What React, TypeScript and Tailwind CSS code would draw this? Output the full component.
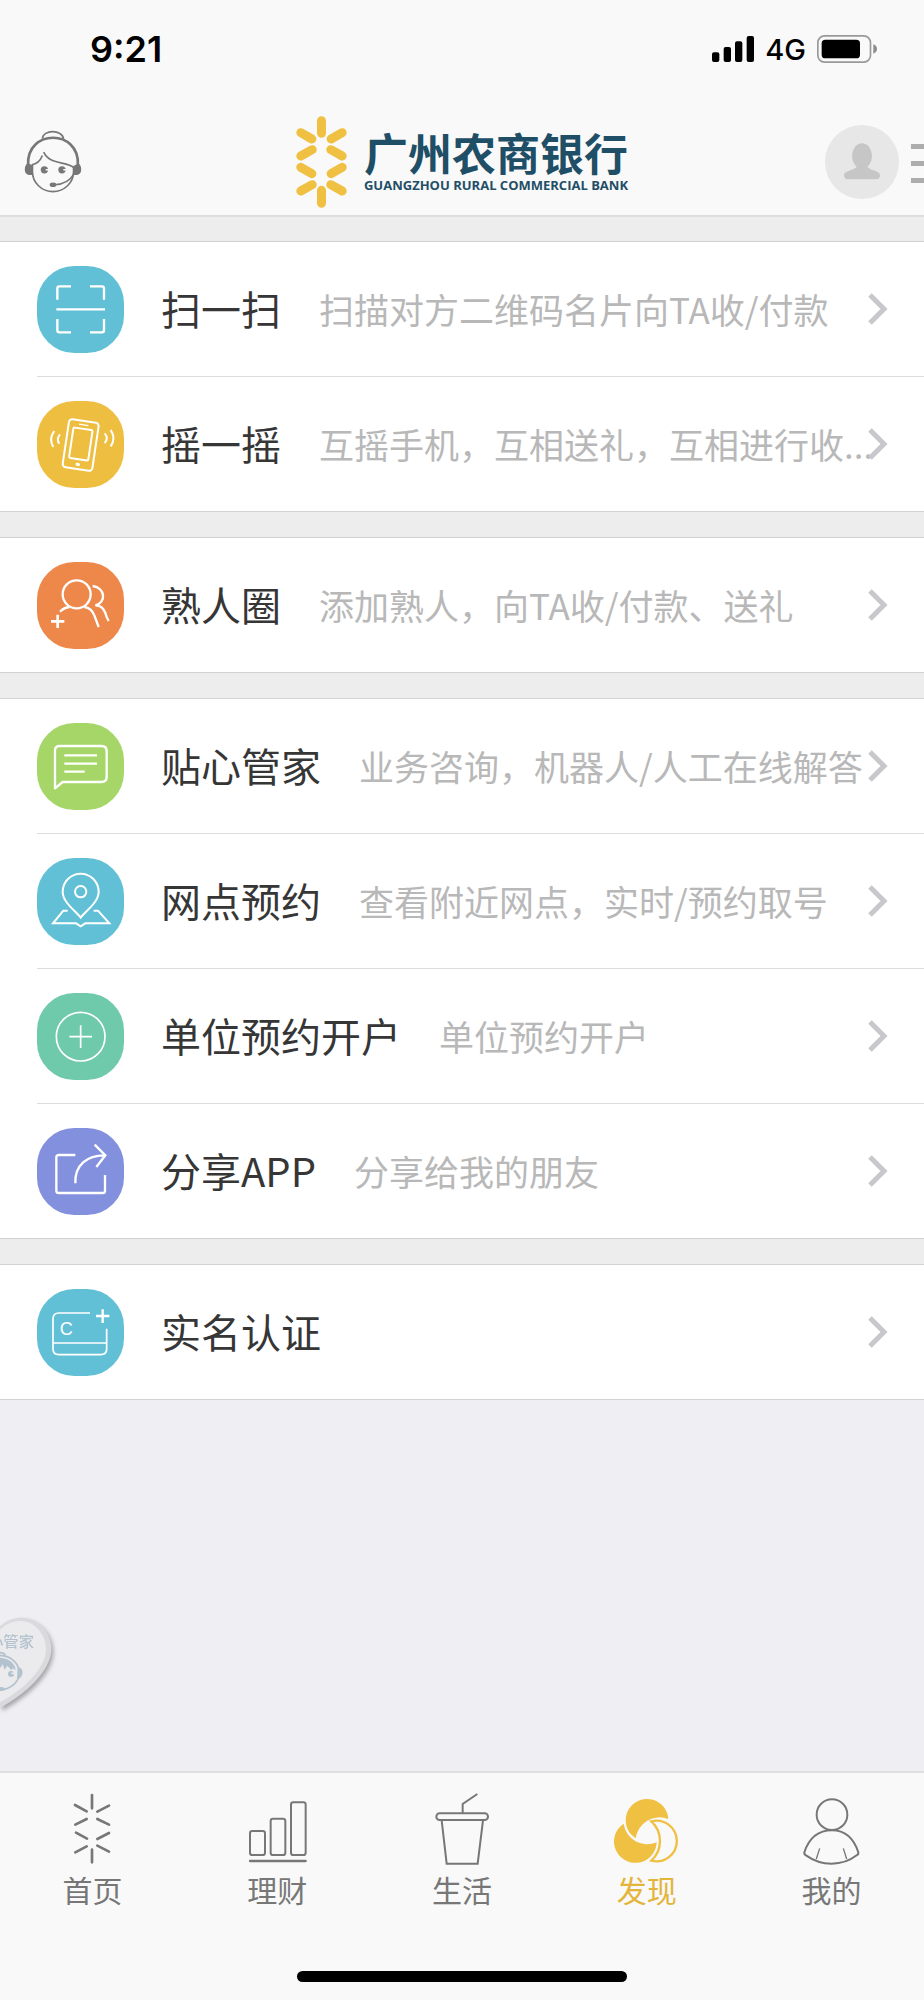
import type { ReactNode } from 'react'
import { clsx } from 'clsx'

type Item = {
  title: string
  desc?: string
  color: string
  icon: ReactNode
}

const scanIcon = (
  <g strokeWidth="7">
    <path d="M102 61H67q-6 0-6 6v34M159 61h36q6 0 6 6v34M201 159v34q0 6-6 6h-36M61 159v34q0 6 6 6h35" />
    <path d="M58 130H204" />
  </g>
)

const shakeIcon = (
  <g strokeWidth="6">
    <g transform="translate(131 132) rotate(8.5)">
      <rect x="-45" y="-73" width="90" height="146" rx="10" />
      <rect x="-29" y="-49" width="58" height="92" rx="4" />
      <path d="M-14-61H14" strokeWidth="4" />
      <ellipse cx="0" cy="59" rx="7" ry="5" fill="white" stroke="none" />
    </g>
    <path d="M52 90Q34 114 49 138M69 100Q57 114 67 128M203 97Q216 112 203 126M221 87Q238 112 221 136" />
  </g>
)

const friendsIcon = (
  <g strokeWidth="7">
    <circle cx="119" cy="97" r="42" />
    <path d="M69 149Q80 137 98 135M142 135Q163 138 172 160L185 195" />
    <path d="M167 72C205 77 209 122 175 130Q197 130 205 153Q208 165 215 177" />
    <path d="M42 178H82M62 158V198" strokeWidth="8" />
  </g>
)

const chatIcon = (
  <g strokeWidth="7">
    <path d="M54 196V82Q54 69 68 69H193Q209 69 209 84V162Q209 177 193 177H77Z" strokeLinejoin="round" />
    <path d="M82 97H180M82 122H180M82 146H143" />
  </g>
)

const pinIcon = (
  <g strokeWidth="6">
    <path d="M131 179C115 158 77 133 77 101A54 54 0 0 1 185 101C185 133 147 158 131 179Z" />
    <circle cx="131" cy="101" r="17" />
    <path d="M92 158H79L48 196H117L131 205L145 196H217L183 158H170" />
  </g>
)

const plusIcon = (
  <g strokeWidth="5">
    <circle cx="131" cy="131" r="73" />
    <path d="M97 131H165M131 97V165" />
  </g>
)

const shareIcon = (
  <g strokeWidth="7">
    <path d="M115 81H66Q58 81 58 88V188Q58 195 66 195H197Q204 195 204 188V141" />
    <path d="M115 166C113 110 152 81 204 82M173 50L205 82L178 117" />
  </g>
)

const cardIcon = (
  <g strokeWidth="5">
    <path d="M159 72H66Q48 72 48 90V180Q48 197 66 197H191Q209 197 209 180V119M48 162H209" />
    <path d="M177 81H217M197 61V102" strokeWidth="7" />
    <text x="68" y="137" fontSize="54" fill="white" stroke="none" className="font-['Liberation_Sans',sans-serif]">
      C
    </text>
  </g>
)

const groups: Item[][] = [
  [
    { title: '扫一扫', desc: '扫描对方二维码名片向TA收/付款', color: '#62c0d6', icon: scanIcon },
    { title: '摇一摇', desc: '互摇手机，互相送礼，互相进行收...', color: '#eebe41', icon: shakeIcon },
  ],
  [{ title: '熟人圈', desc: '添加熟人，向TA收/付款、送礼', color: '#ee874a', icon: friendsIcon }],
  [
    { title: '贴心管家', desc: '业务咨询，机器人/人工在线解答', color: '#a5d667', icon: chatIcon },
    { title: '网点预约', desc: '查看附近网点，实时/预约取号', color: '#62c0d6', icon: pinIcon },
    { title: '单位预约开户', desc: '单位预约开户', color: '#6fc9ab', icon: plusIcon },
    { title: '分享APP', desc: '分享给我的朋友', color: '#8290de', icon: shareIcon },
  ],
  [{ title: '实名认证', color: '#62c0d6', icon: cardIcon }],
]

const tabs = [
  {
    label: '首页',
    icon: (
      <path
        strokeWidth="8"
        strokeLinecap="round"
        d="M108 6V46M57 36L92 55M159 38L124 56M92 78L58 95M124 78L159 95M60 119L93 137M159 120L124 138M92 160L58 178M124 158L159 176M108 170V208"
      />
    ),
  },
  {
    label: '理财',
    icon: (
      <g strokeWidth="6">
        <rect x="27" y="114" width="45" height="72" rx="7" />
        <rect x="89" y="77" width="44" height="109" rx="7" />
        <rect x="150" y="28" width="44" height="158" rx="7" />
        <path d="M27 204H194" strokeWidth="7" strokeLinecap="round" />
      </g>
    ),
  },
  {
    label: '生活',
    icon: (
      <g strokeWidth="6">
        <rect x="31" y="61" width="155" height="20" rx="10" />
        <path d="M47 82L62 212H155L171 82M110 60V33L154 3" />
      </g>
    ),
  },
  {
    label: '发现',
    active: true,
    icon: (
      <g>
        <path d="M172 78A64 64 0 1 0 74 136A72 72 0 0 1 172 78Z" fill="currentColor" stroke="none" />
        <path d="M38 92A64 64 0 1 0 137 148A71 71 0 0 1 38 92Z" fill="currentColor" stroke="none" />
        <path d="M121 85A61 61 0 1 1 121 203A80 80 0 0 0 121 85Z" strokeWidth="7" />
      </g>
    ),
  },
  {
    label: '我的',
    icon: (
      <g strokeWidth="6">
        <circle cx="108" cy="65" r="46" />
        <path d="M108 112C60 112 36 145 25 178Q24 184 30 187Q65 212 107 212Q150 212 182 187Q188 184 187 178C176 145 154 112 108 112Z" />
        <path d="M71 166L61 198M142 166L152 198" strokeWidth="4" />
      </g>
    ),
  },
]

function StatusBar() {
  return (
    <div className="flex h-[98px] items-center justify-between pl-[90px] pr-[47px] font-['Inter',sans-serif] text-black">
      <span className="text-[36px] font-semibold leading-none">9:21</span>
      <div className="flex items-center gap-[11px]">
        <svg viewBox="0 0 126 78" className="h-[26px] w-[42px]" fill="currentColor">
          <rect x="0" y="49" width="22" height="29" rx="6" />
          <rect x="35" y="33" width="22" height="45" rx="6" />
          <rect x="69" y="16" width="22" height="62" rx="6" />
          <rect x="104" y="0" width="22" height="78" rx="6" />
        </svg>
        <span className="text-[29px] font-medium leading-none">4G</span>
        <svg viewBox="0 0 180 84" className="h-7 w-[60px]">
          <rect x="2.5" y="2.5" width="158" height="79" rx="20" fill="none" stroke="#999999" strokeWidth="5" />
          <rect x="14" y="14" width="115" height="56" rx="11" fill="black" />
          <path d="M169 28q11 4 11 14t-11 14z" fill="#8e8e8e" />
        </svg>
      </div>
    </div>
  )
}

function ServiceIcon() {
  return (
    <svg viewBox="0 0 180 196" className="h-[65px] w-[60px]" fill="none" stroke="#777777" strokeWidth="5">
      <path d="M58 29C60 1 118 1 122 30" />
      <path d="M15 108C10-1 170-1 165 108" strokeWidth="8" />
      <path d="M28 108V128A62 61 0 0 0 152 128V112" />
      <path d="M62 70C80 110 130 96 154 117M58 80Q48 105 26 108" />
      <path d="M14 104L26 108L30 138C10 142 5 132 5 122Q5 108 14 104ZM166 104L154 110L150 138C170 142 175 132 175 122Q175 108 166 104Z" fill="#777777" stroke="none" />
      <g stroke="none" fill="#777777">
        <circle cx="64" cy="123" r="11" />
        <circle cx="117" cy="123" r="11" />
        <ellipse cx="90" cy="168" rx="10" ry="7" />
      </g>
      <path d="M68 123h8M121 123h8" stroke="#f9f9f9" />
      <path d="M96 168Q135 166 153 136" />
    </svg>
  )
}

function Logo() {
  return (
    <div className="flex items-center gap-[17px]">
      <svg viewBox="0 0 152 276" className="h-[92px] w-[51px]" stroke="#efc041" strokeWidth="27" strokeLinecap="round">
        <path d="M76 14V52M76 223V262M14 50L47 69M138 50L105 69M48 101L14 120M104 101L138 120M14 154L47 173M138 154L105 173M48 206L14 225M104 206L138 225" />
      </svg>
      <div className="flex flex-col text-[#1f4e67]">
        <span className="whitespace-nowrap text-[44px] font-bold leading-[46px]">广州农商银行</span>
        <span className="whitespace-nowrap font-['Open_Sans',sans-serif] text-[13px] font-bold leading-5">
          GUANGZHOU RURAL COMMERCIAL BANK
        </span>
      </div>
    </div>
  )
}

function Header() {
  return (
    <header className="overflow-hidden border-b-2 border-[#dddddd] bg-[#f9f9f9]">
      <StatusBar />
      <div className="grid h-[117px] grid-cols-[1fr_auto_1fr] items-center pt-2.5">
        <button aria-label="客服" className="ml-[23px] justify-self-start">
          <ServiceIcon />
        </button>
        <Logo />
        <div className="flex items-center gap-3 justify-self-end">
          <button aria-label="头像">
            <svg viewBox="0 0 222 222" className="size-[74px]">
              <circle cx="111" cy="111" r="111" fill="#e7e7e7" />
              <g fill="#c6c6c6">
                <ellipse cx="111" cy="93" rx="30" ry="38" />
                <path d="M57 151C57 134 94 138 97 120H125C128 138 165 134 165 151Q165 163 153 163H69Q57 163 57 151Z" />
              </g>
            </svg>
          </button>
          <button aria-label="菜单" className="flex w-[13px] flex-col gap-3 pt-1">
            <span className="h-[5px] bg-[#adadad]" />
            <span className="h-[5px] bg-[#adadad]" />
            <span className="h-[5px] bg-[#adadad]" />
          </button>
        </div>
      </div>
    </header>
  )
}

function Row({ item, first }: { item: Item; first: boolean }) {
  return (
    <li className={clsx('ml-[37px]', !first && 'border-t border-[#dcdcdc]')}>
      <a href="#" className="flex h-[134px] items-center pr-9">
        <svg viewBox="0 0 261 261" className="size-[87px] shrink-0" fill="none" stroke="white">
          <rect width="261" height="261" rx="112" fill={item.color} stroke="none" />
          {item.icon}
        </svg>
        <span className="ml-[37px] shrink-0 pb-0.5 text-[40px] text-[#363636]">{item.title}</span>
        <span className="ml-[38px] w-0 flex-1 whitespace-nowrap text-[35px] text-[#b8b8b8]">{item.desc}</span>
        <svg viewBox="0 0 20 32" className="h-8 w-5 shrink-0" fill="none" stroke="#c7c7cc" strokeWidth="5">
          <path d="M2 2L16 16L2 30" />
        </svg>
      </a>
    </li>
  )
}

function HeartBadge() {
  return (
    <button aria-label="贴心管家" className="absolute bottom-[58px] left-0">
      <svg viewBox="0 0 180 300" className="h-[100px] w-[60px] drop-shadow-[2px_3px_2px_rgba(0,0,0,0.3)]">
        <path d="M0 40C20 20 45 14 66 14C115 14 154 58 154 108C154 175 72 246 0 284Z" fill="#dadadc" />
        <path d="M0 50C20 30 42 24 60 24C104 24 138 64 138 108C138 168 66 232 0 268Z" fill="#ebeaec" />
        <text x="-36" y="102" fontSize="46" fontWeight="500" fill="#b3c2cf">
          心管家
        </text>
        <g fill="none" stroke="#b3c2cf" strokeWidth="5">
          <path d="M0 119Q12 119 16 127M0 127C34 128 58 152 58 180C58 206 34 228 0 231" />
          <path d="M0 134C28 136 46 152 47 172L38 166L34 172L22 158L14 170L8 154L0 166Z" fill="#b3c2cf" stroke="none" />
          <circle cx="33" cy="183" r="9" fill="#b3c2cf" stroke="none" />
          <path d="M34 181h8" stroke="#ebeaec" />
          <path d="M55 165Q66 168 65 180Q64 192 54 195Z" fill="#b3c2cf" />
          <ellipse cx="4" cy="228" rx="10" ry="6" fill="#b3c2cf" stroke="none" />
        </g>
      </svg>
    </button>
  )
}

function TabBar() {
  return (
    <nav className="border-t-2 border-[#dfdfe2] bg-[#f9f9f9] pb-[18px] pt-5">
      <div className="grid grid-cols-5">
        {tabs.map((tab) => (
          <a
            key={tab.label}
            href="#"
            className={clsx('flex flex-col items-center gap-1.5', tab.active ? 'text-[#efc041]' : 'text-[#777777]')}
          >
            <svg viewBox="0 0 216 216" className="size-[72px]" fill="none" stroke="currentColor">
              {tab.icon}
            </svg>
            <span className={clsx('text-[30px] leading-9', tab.active && 'text-[#e3b53a]')}>{tab.label}</span>
          </a>
        ))}
      </div>
      <div className="mx-auto mt-16 h-[11px] w-[330px] rounded-full bg-black" />
    </nav>
  )
}

export default function App() {
  return (
    <div className="flex min-h-screen flex-col bg-[#eeeef3] font-['Noto_Sans_CJK_SC',sans-serif]">
      <Header />
      <main className="relative flex-1">
        <div className="flex flex-col gap-[25px] bg-[#ededed] pt-6">
          {groups.map((group) => (
            <ul key={group[0].title} className="border-y border-[#d2d2d2] bg-white">
              {group.map((item, i) => (
                <Row key={item.title} item={item} first={i === 0} />
              ))}
            </ul>
          ))}
        </div>
        <HeartBadge />
      </main>
      <TabBar />
    </div>
  )
}
